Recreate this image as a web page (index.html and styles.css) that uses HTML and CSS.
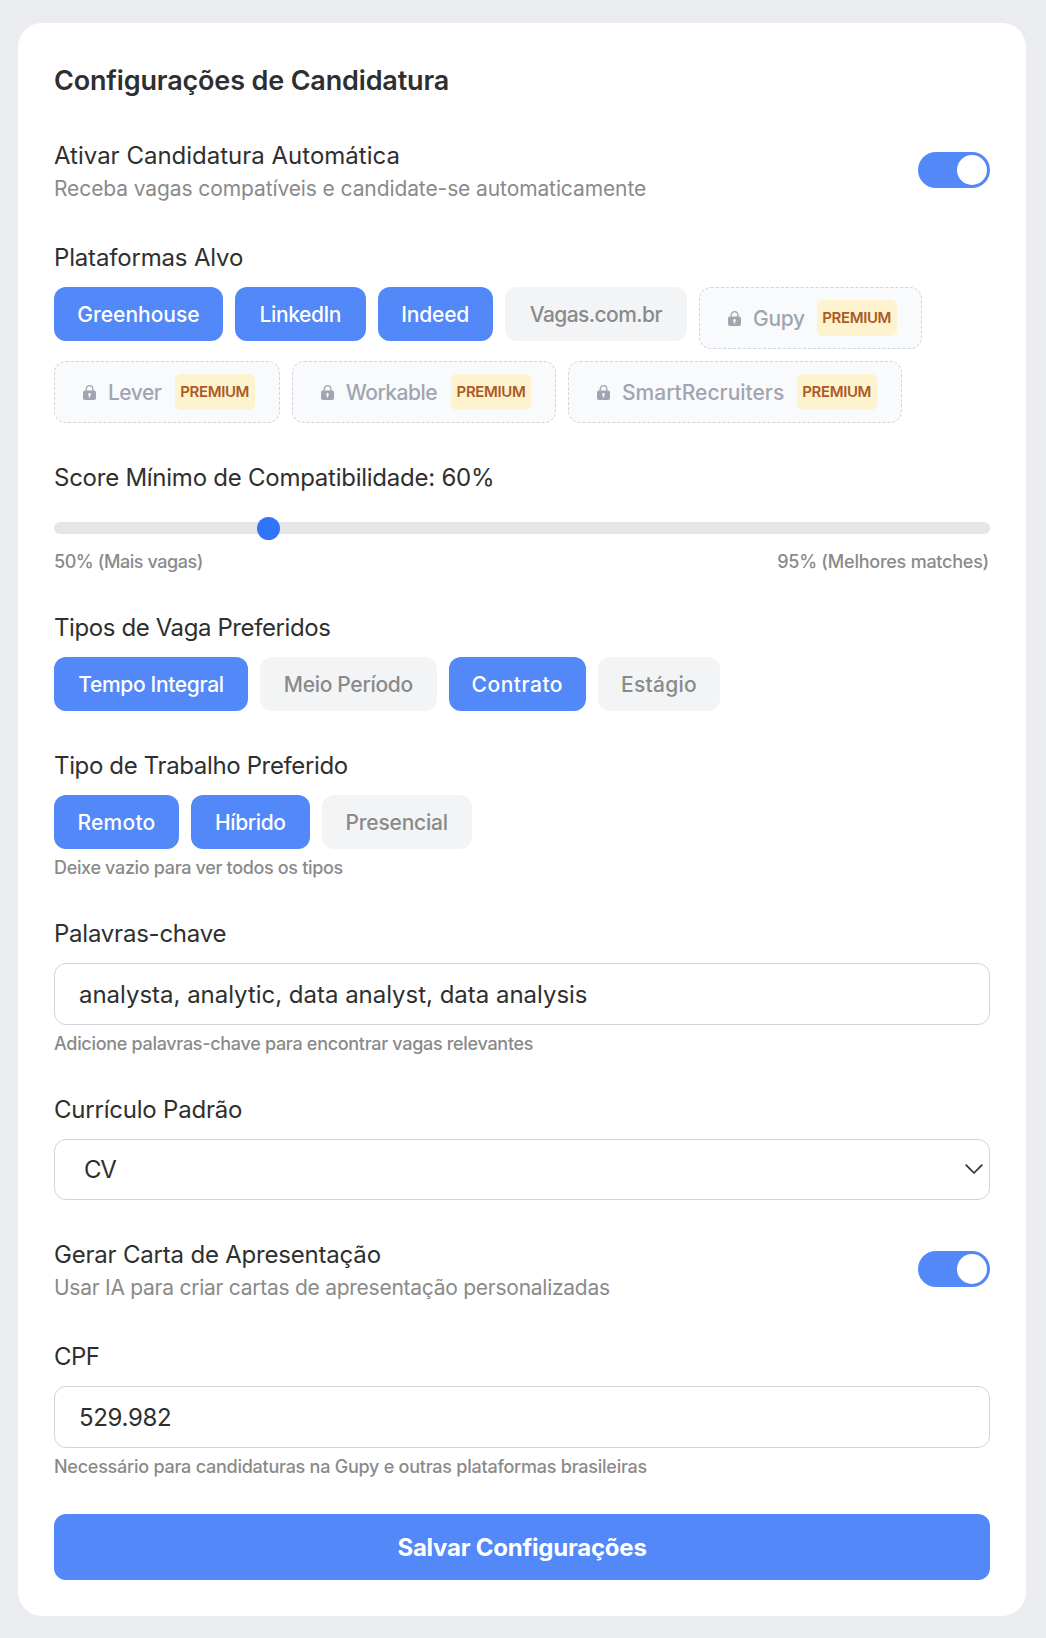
FILE: index.html
```html
<!DOCTYPE html>
<html lang="pt-BR">
<head>
    <meta charset="UTF-8">
    <meta name="viewport" content="width=device-width, initial-scale=1.0">
    <title>Configurações de Candidatura</title>
    <link rel="stylesheet" href="styles.css">
</head>
<body>
    <svg class="sprite" aria-hidden="true">
        <symbol id="lock" viewBox="0 0 13 15">
            <path d="M3.2 6.4V4a3.3 3.3 0 0 1 6.6 0v2.4" fill="none" stroke="currentColor" stroke-width="1.3"/>
            <path fill="currentColor" fill-rule="evenodd" d="M2 5.4h9a2 2 0 0 1 2 2V13a2 2 0 0 1-2 2H2a2 2 0 0 1-2-2V7.4a2 2 0 0 1 2-2zM6.5 8a1.5 1.5 0 0 0-.6 2.8V12.4h1.2V10.8a1.5 1.5 0 0 0-.6-2.8z"/>
        </symbol>
    </svg>

    <form class="card">
        <h1 class="title">Configurações de Candidatura</h1>

        <div class="toggle-row">
            <div>
                <div class="label">Ativar Candidatura Automática</div>
                <p class="description receba">Receba vagas compatíveis e candidate-se automaticamente</p>
            </div>
            <button type="button" class="toggle" aria-label="Ativar"><span class="toggle-knob"></span></button>
        </div>

        <div class="field">
            <div class="label plataformas">Plataformas Alvo</div>
            <div class="chips">
                <button type="button" class="chip active greenhouse">Greenhouse</button>
                <button type="button" class="chip active linkedin">LinkedIn</button>
                <button type="button" class="chip active indeed">Indeed</button>
                <button type="button" class="chip vagas">Vagas.com.br</button>
                <button type="button" class="chip locked gupy"><svg class="lock"><use href="#lock"/></svg>Gupy<span class="badge">PREMIUM</span></button>
                <button type="button" class="chip locked lever"><svg class="lock"><use href="#lock"/></svg>Lever<span class="badge">PREMIUM</span></button>
                <button type="button" class="chip locked workable"><svg class="lock"><use href="#lock"/></svg>Workable<span class="badge">PREMIUM</span></button>
                <button type="button" class="chip locked smart"><svg class="lock"><use href="#lock"/></svg>SmartRecruiters<span class="badge">PREMIUM</span></button>
            </div>
        </div>

        <div class="field">
            <div class="label score">Score Mínimo de Compatibilidade: 60%</div>
            <input type="range" class="slider" min="50" max="95" step="5" value="60">
            <div class="range-labels">
                <span class="min">50% (Mais vagas)</span>
                <span class="max">95% (Melhores matches)</span>
            </div>
        </div>

        <div class="field">
            <div class="label tipos">Tipos de Vaga Preferidos</div>
            <div class="chips">
                <button type="button" class="chip active integral">Tempo Integral</button>
                <button type="button" class="chip meio">Meio Período</button>
                <button type="button" class="chip active contrato">Contrato</button>
                <button type="button" class="chip estagio">Estágio</button>
            </div>
        </div>

        <div class="field">
            <div class="label trabalho">Tipo de Trabalho Preferido</div>
            <div class="chips">
                <button type="button" class="chip active remoto">Remoto</button>
                <button type="button" class="chip active hibrido">Híbrido</button>
                <button type="button" class="chip presencial">Presencial</button>
            </div>
            <p class="hint deixe">Deixe vazio para ver todos os tipos</p>
        </div>

        <div class="field">
            <label class="label palavras" for="keywords">Palavras-chave</label>
            <input type="text" class="input keywords-input" id="keywords" value="analysta, analytic, data analyst, data analysis">
            <p class="hint adicione">Adicione palavras-chave para encontrar vagas relevantes</p>
        </div>

        <div class="field">
            <div class="label curriculo">Currículo Padrão</div>
            <div class="select">
                <span>CV</span>
                <svg class="chevron" viewBox="0 0 18 11"><path d="M1.2 1.2 9 9l7.8-7.8" fill="none" stroke="currentColor" stroke-width="1.7" stroke-linecap="round" stroke-linejoin="round"/></svg>
            </div>
        </div>

        <div class="toggle-row">
            <div>
                <div class="label gerar">Gerar Carta de Apresentação</div>
                <p class="description usar">Usar IA para criar cartas de apresentação personalizadas</p>
            </div>
            <button type="button" class="toggle" aria-label="Gerar carta"><span class="toggle-knob"></span></button>
        </div>

        <div class="field">
            <label class="label cpf" for="cpf">CPF</label>
            <input type="text" class="input cpf-input" id="cpf" value="529.982">
            <p class="hint necessario">Necessário para candidaturas na Gupy e outras plataformas brasileiras</p>
        </div>

        <button type="button" class="save">Salvar Configurações</button>
    </form>
</body>
</html>
```
FILE: styles.css
```css
* {
    box-sizing: border-box;
}

body {
    margin: 0;
    padding: 23px 20px 22px 18px;
    background: #ebecf0;
    color: #2f2f2f;
    font-family: 'Inter', sans-serif;
}

button,
input {
    font-family: inherit;
}

.sprite {
    display: none;
}

.card {
    display: flex;
    flex-direction: column;
    gap: 36px;
    padding: 36px;
    background: #fff;
    border-radius: 24px;
}

.title {
    margin: 0 0 -2px;
    font-size: 27px;
    font-weight: 600;
    line-height: 44px;
    letter-spacing: -0.16px;
}

.label {
    display: block;
    font-size: 24px;
    line-height: 38px;
}

.field > .label {
    margin-bottom: 10px;
}

.description,
.hint {
    margin: 0;
    color: #8a8a8a;
}

.description {
    font-size: 21px;
    line-height: 28px;
}

.hint {
    margin: 7px 0 -1px;
    font-size: 18px;
    font-weight: 500;
    line-height: 24px;
}

/* Toggle */
.toggle-row {
    display: flex;
    justify-content: space-between;
    align-items: center;
}

.toggle {
    display: flex;
    justify-content: flex-end;
    width: 72px;
    height: 36px;
    padding: 3px;
    border: none;
    border-radius: 18px;
    background: #5388f9;
}

.toggle-knob {
    width: 30px;
    height: 30px;
    border-radius: 50%;
    background: #fff;
}

/* Chips */
.chips {
    display: flex;
    flex-wrap: wrap;
    align-items: flex-start;
    gap: 12px;
}

.chip {
    display: flex;
    justify-content: center;
    align-items: center;
    height: 54px;
    padding: 0;
    border: none;
    border-radius: 12px;
    background: #f3f4f6;
    color: #8a8a8a;
    font-size: 21px;
    font-weight: 500;
    white-space: nowrap;
}

.chip.active {
    background: #5388f9;
    color: #fff;
}

.chip.locked {
    justify-content: flex-start;
    height: 62px;
    padding: 0 24px 0 28px;
    border: 1px dashed #d1d5db;
    background: #f9fafc;
    color: #a0a5b1;
}

.lock {
    width: 13px;
    height: 15px;
    margin-right: 12px;
}

.badge {
    width: 80px;
    margin-left: auto;
    border-radius: 6px;
    background: #fdf3cf;
    color: #ac5a24;
    font-size: 15px;
    font-weight: 600;
    line-height: 36px;
    letter-spacing: -0.378px;
    text-align: center;
}

/* Slider */
.slider {
    display: block;
    width: 100%;
    height: 12px;
    margin: 25px 0 16px;
    border-radius: 6px;
    background: #e5e6ea;
    appearance: none;
}

.slider::-webkit-slider-thumb {
    width: 23px;
    height: 23px;
    border-radius: 50%;
    background: #3074f8;
    appearance: none;
}

.range-labels {
    display: flex;
    justify-content: space-between;
    margin-bottom: -1px;
    padding-right: 1px;
    color: #8a8a8a;
    font-size: 18px;
    font-weight: 500;
    line-height: 24px;
}

/* Inputs */
.input,
.select {
    display: flex;
    align-items: center;
    width: 100%;
    border: 1px solid #d2d3db;
    border-radius: 12px;
    background: #fff;
    color: #2f2f2f;
    font-size: 24px;
}

.input {
    height: 62px;
    padding: 0 24px;
}

.select {
    justify-content: space-between;
    height: 61px;
    padding: 0 6px 0 29px;
    letter-spacing: -1.4px;
}

.chevron {
    width: 18px;
    height: 11px;
}

.save {
    height: 66px;
    border: none;
    border-radius: 12px;
    background: #5388f9;
    color: #fff;
    font-size: 24px;
    font-weight: 700;
    letter-spacing: -0.223px;
}

/* Chip sizes */
.greenhouse { width: 169px; }
.linkedin { width: 130.7px; letter-spacing: -0.4px; }
.indeed { width: 115px; letter-spacing: -0.2px; }
.vagas { width: 182.3px; letter-spacing: -0.582px; }
.gupy { width: 222.7px; letter-spacing: -0.304px; }
.lever { width: 225.7px; letter-spacing: -0.5px; }
.workable { width: 264.3px; letter-spacing: -0.5px; }
.smart { width: 333.7px; }
.integral { width: 194px; letter-spacing: -0.324px; }
.meio { width: 176.7px; letter-spacing: -0.309px; }
.contrato { width: 137.3px; letter-spacing: 0.5px; }
.estagio { width: 122px; letter-spacing: 0.258px; }
.remoto { width: 125px; letter-spacing: 0.253px; }
.hibrido { width: 118.7px; letter-spacing: -0.378px; }
.presencial { width: 150px; letter-spacing: -0.205px; }

/* Text tracking */
.receba { letter-spacing: -0.1px; }
.plataformas { letter-spacing: -0.17px; }
.score { letter-spacing: -0.25px; }
.min { letter-spacing: -0.44px; }
.max { letter-spacing: -0.24px; }
.tipos { letter-spacing: -0.4px; }
.trabalho { letter-spacing: -0.36px; }
.deixe { letter-spacing: -0.336px; }
.palavras { letter-spacing: -0.23px; }
.keywords-input { letter-spacing: -0.02px; }
.adicione { letter-spacing: -0.305px; }
.curriculo { letter-spacing: -0.215px; }
.gerar { letter-spacing: -0.2px; }
.usar { letter-spacing: -0.26px; }
.cpf { letter-spacing: -0.58px; }
.cpf-input { letter-spacing: -0.33px; }
.necessario { letter-spacing: -0.246px; }
```
